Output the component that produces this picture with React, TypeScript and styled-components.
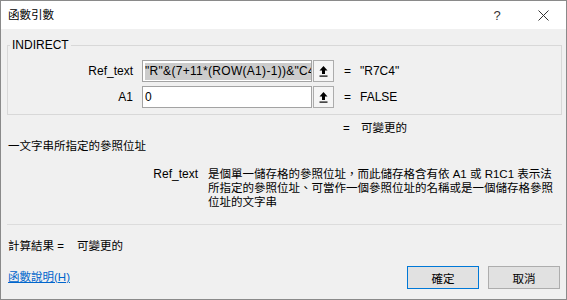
import styled, { createGlobalStyle } from "styled-components";

const GlobalStyle = createGlobalStyle`
  html, body {
    margin: 0;
    padding: 0;
    background: #ffffff;
  }
  body {
    font-family: "Liberation Sans", "Noto Sans CJK TC", sans-serif;
    font-size: 12px;
    color: #000000;
  }
`;

const Window = styled.div`
  width: 567px;
  height: 300px;
  box-sizing: border-box;
  border: 1px solid #8a8a8a;
  background: #f0f0f0;
  display: flex;
  flex-direction: column;
`;

const TitleBar = styled.div`
  height: 28px;
  background: #ffffff;
  display: flex;
  align-items: center;
`;

const Title = styled.div`
  flex: 1;
  padding-left: 7px;
  font-size: 11.5px;
  line-height: 16px;
  color: #000000;
`;

const CaptionButton = styled.div`
  width: 46px;
  height: 28px;
  display: flex;
  align-items: center;
  justify-content: center;
  color: #333333;
  font-size: 13px;
`;

const Body = styled.div`
  flex: 1;
  display: flex;
  flex-direction: column;
  padding: 9px 4px 0 6px;
`;

const GroupBox = styled.fieldset`
  margin: 0;
  padding: 8px 0 6px;
  border: 1px solid #d8d8d8;
  min-width: 0;
  display: flex;
  flex-direction: column;
  gap: 4px;
`;

const Legend = styled.legend`
  margin-left: 2px;
  padding: 0 2px;
  line-height: 14px;
  font-size: 12px;
`;

const ArgRow = styled.div`
  display: flex;
  align-items: center;
  height: 22px;
`;

const ArgLabel = styled.div`
  width: 125px;
  text-align: right;
  line-height: 15px;
`;

const InputBox = styled.div`
  width: 170px;
  height: 22px;
  margin-left: 9px;
  box-sizing: border-box;
  border: 1px solid #a3a3a3;
  background: #ffffff;
  padding: 1px 0 0 2px;
  overflow: hidden;
  white-space: nowrap;
  line-height: 18px;
  letter-spacing: 0.3px;
`;

const Selected = styled.span`
  display: inline-block;
  background: #cccccc;
  line-height: 17px;
`;

const RefButton = styled.div`
  width: 21px;
  height: 22px;
  margin-left: 1px;
  box-sizing: border-box;
  border: 1px solid #acacac;
  background: #f5f5f5;
  display: flex;
  align-items: center;
  justify-content: center;
`;

const Eq = styled.span<{ $width: number }>`
  display: inline-block;
  flex: none;
  width: ${({ $width }) => $width}px;
`;

const ArgValue = styled.div`
  margin-left: 10px;
  display: flex;
  line-height: 15px;
`;

const ResultLine = styled.div`
  margin-top: 6px;
  padding-left: 336px;
  font-size: 11.5px;
  line-height: 15px;
  display: flex;
`;

const Summary = styled.div`
  margin-top: 3px;
  padding-left: 1px;
  font-size: 11.5px;
  line-height: 15px;
`;

const DescRow = styled.div`
  margin-top: 13px;
  display: flex;
  line-height: 14px;
`;

const DescLabel = styled.div`
  width: 191px;
  text-align: right;
`;

const DescText = styled.div`
  margin-left: 10px;
  font-size: 11.5px;
  white-space: nowrap;
`;

const Separator = styled.div`
  margin-top: 15px;
  height: 1px;
  background: #dcdcdc;
`;

const CalcLine = styled.div`
  margin-top: 14px;
  padding-left: 1px;
  font-size: 11.5px;
  line-height: 15px;
  display: flex;
`;

const Footer = styled.div`
  margin-top: 12px;
  margin-right: 2px;
  padding-left: 1px;
  display: flex;
  align-items: center;
  justify-content: space-between;
`;

const HelpLink = styled.a`
  color: #0066cc;
  text-decoration: underline;
  font-size: 11.5px;
  line-height: 15px;
  cursor: pointer;
`;

const ButtonGroup = styled.div`
  display: flex;
  gap: 9px;
`;

const DialogButton = styled.button<{ $primary?: boolean }>`
  width: 72px;
  height: 23px;
  box-sizing: border-box;
  padding: 0;
  font-family: inherit;
  font-size: 11.5px;
  color: #000000;
  background: #e1e1e1;
  border: 1px solid ${({ $primary }) => ($primary ? "#0078d7" : "#adadad")};
  border-radius: 0;
`;

const RefIcon = () => (
  <svg width="9" height="11" viewBox="0 0 9 11">
    <path d="M4.5 0 L8.5 4.5 L6 4.5 L6 8 L3 8 L3 4.5 L0.5 4.5 Z" fill="#000" />
    <rect x="0.5" y="9.5" width="8" height="1.2" fill="#000" />
  </svg>
);

const CloseIcon = () => (
  <svg width="11" height="11" viewBox="0 0 11 11">
    <path d="M0.5 0.5 L10.5 10.5 M10.5 0.5 L0.5 10.5" stroke="#333" strokeWidth="1" />
  </svg>
);

const args = [
  { name: "Ref_text", text: '"R"&(7+11*(ROW(A1)-1))&"C4"', selected: true, value: '"R7C4"' },
  { name: "A1", text: "0", selected: false, value: "FALSE" },
];

export default function App() {
  return (
    <>
      <GlobalStyle />
      <Window>
        <TitleBar>
          <Title>函數引數</Title>
          <CaptionButton>?</CaptionButton>
          <CaptionButton>
            <CloseIcon />
          </CaptionButton>
        </TitleBar>
        <Body>
          <GroupBox>
            <Legend>INDIRECT</Legend>
            {args.map((a) => (
              <ArgRow key={a.name}>
                <ArgLabel>{a.name}</ArgLabel>
                <InputBox>{a.selected ? <Selected>{a.text}</Selected> : a.text}</InputBox>
                <RefButton>
                  <RefIcon />
                </RefButton>
                <ArgValue>
                  <Eq $width={16}>=</Eq>
                  <span>{a.value}</span>
                </ArgValue>
              </ArgRow>
            ))}
          </GroupBox>
          <ResultLine>
            <Eq $width={18}>=</Eq>
            <span>可變更的</span>
          </ResultLine>
          <Summary>一文字串所指定的參照位址</Summary>
          <DescRow>
            <DescLabel>Ref_text</DescLabel>
            <DescText>
              是個單一儲存格的參照位址，而此儲存格含有依 A1 或 R1C1 表示法
              <br />
              所指定的參照位址、可當作一個參照位址的名稱或是一個儲存格參照
              <br />
              位址的文字串
            </DescText>
          </DescRow>
          <Separator />
          <CalcLine>
            <Eq $width={69}>計算結果 =</Eq>
            <span>可變更的</span>
          </CalcLine>
          <Footer>
            <HelpLink>函數說明(H)</HelpLink>
            <ButtonGroup>
              <DialogButton $primary>確定</DialogButton>
              <DialogButton>取消</DialogButton>
            </ButtonGroup>
          </Footer>
        </Body>
      </Window>
    </>
  );
}
